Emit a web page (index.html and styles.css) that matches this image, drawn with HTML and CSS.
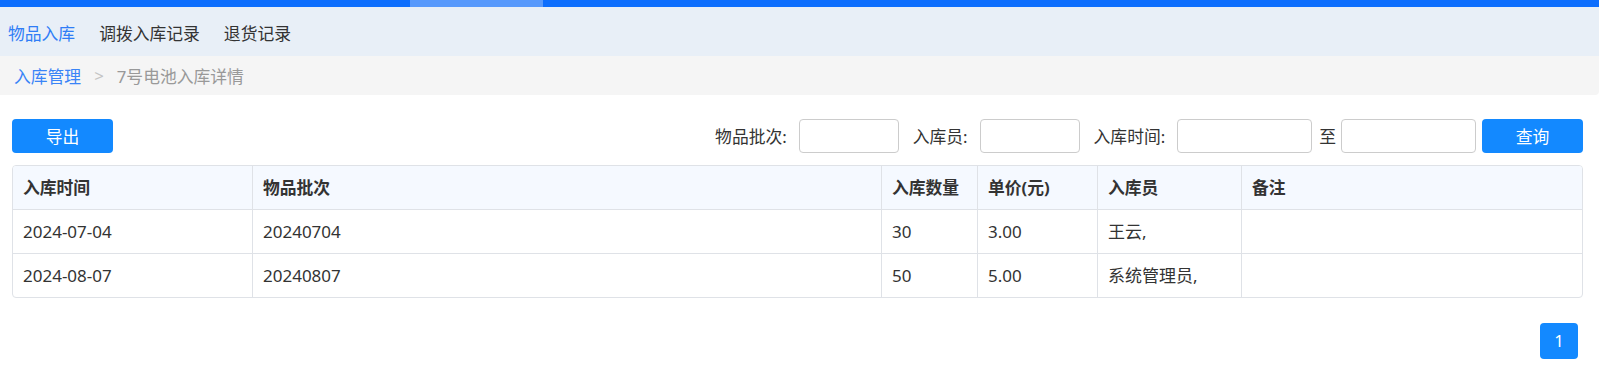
FILE: index.html
```html
<!DOCTYPE html>
<html lang="zh-CN">
<head>
  <meta charset="UTF-8">
  <meta name="viewport" content="width=device-width, initial-scale=1.0">
  <title>7号电池入库详情</title>
  <link rel="stylesheet" href="styles.css">
</head>
<body>

  <div class="topbar"><span class="topbar-mark"></span></div>

  <div class="tabs">
    <a href="#" class="tab active">物品入库</a>
    <a href="#" class="tab">调拨入库记录</a>
    <a href="#" class="tab">退货记录</a>
  </div>

  <div class="crumbs">
    <a href="#">入库管理</a>
    <span class="sep">&gt;</span>
    <span class="current">7号电池入库详情</span>
  </div>

  <div class="main">
    <div class="toolbar">
      <button class="btn">导出</button>
      <div class="filters">
        <label>物品批次:</label>
        <input type="text" class="ipt">
        <label class="gap">入库员:</label>
        <input type="text" class="ipt">
        <label class="gap">入库时间:</label>
        <input type="text" class="ipt wide">
        <span class="to">至</span>
        <input type="text" class="ipt wide">
        <button class="btn search">查询</button>
      </div>
    </div>

    <div class="table-box">
      <table>
        <colgroup>
          <col style="width: 240px">
          <col style="width: 629px">
          <col style="width: 96px">
          <col style="width: 120px">
          <col style="width: 144px">
          <col>
        </colgroup>
        <thead>
          <tr>
            <th>入库时间</th>
            <th>物品批次</th>
            <th>入库数量</th>
            <th>单价(元)</th>
            <th>入库员</th>
            <th>备注</th>
          </tr>
        </thead>
        <tbody>
          <tr>
            <td>2024-07-04</td>
            <td>20240704</td>
            <td>30</td>
            <td>3.00</td>
            <td>王云,</td>
            <td></td>
          </tr>
          <tr>
            <td>2024-08-07</td>
            <td>20240807</td>
            <td>50</td>
            <td>5.00</td>
            <td>系统管理员,</td>
            <td></td>
          </tr>
        </tbody>
      </table>
    </div>

    <div class="pager">
      <span class="page on">1</span>
    </div>
  </div>

</body>
</html>
```

FILE: styles.css
```css
body {
  font-family: "Noto Sans", "Noto Sans CJK SC", sans-serif;
  font-size: 16.8px;
  color: #333;
  background-color: #fff;
  margin: 0;
  padding: 0;
}

a {
  text-decoration: none;
}

/* barra azul do topo */
.topbar {
  height: 7px;
  background-color: #0d6efd;
  display: flex;
}

.topbar-mark {
  margin-left: 410px;
  width: 133px;
  background-color: #5799fc;
}

.tabs {
  height: 49px;
  background-color: #e8eff7;
  display: flex;
  align-items: center;
  gap: 24px;
  padding-left: 8px;
  padding-top: 2px;
  box-sizing: border-box;
}

.tab {
  color: #333;
}

.tab.active {
  color: #2f7df6;
}

.crumbs {
  height: 39px;
  background-color: #f5f5f5;
  display: flex;
  align-items: center;
  padding-left: 14px;
  border-bottom-right-radius: 4px;
}

.crumbs a {
  color: #3a84f7;
}

.crumbs .sep {
  color: #c4c4c4;
  margin: 0 13px;
}

.crumbs .current {
  color: #999;
}

.main {
  padding: 24px 16px 0 12px;
}

.toolbar {
  display: flex;
  justify-content: space-between;
  align-items: center;
}

.btn {
  width: 101px;
  height: 34px;
  background-color: #1389ff;
  color: #fff;
  border: none;
  border-radius: 4px;
  font-family: inherit;
  font-size: 16.8px;
  padding: 0;
  cursor: pointer;
}

.btn:hover {
  background-color: #0a7cf0;
}

.filters {
  display: flex;
  align-items: center;
}

.filters label {
  margin-right: 12px;
}

.filters label.gap {
  margin-left: 14px;
}

.ipt {
  width: 100px;
  height: 34px;
  box-sizing: border-box;
  border: 1px solid #cccccc;
  border-radius: 4px;
  padding: 0 8px;
  font-family: inherit;
  font-size: 15px;
}

.ipt.wide {
  width: 135px;
}

.to {
  margin: 0 5px 0 7px;
}

.search {
  margin-left: 6px;
}

.table-box {
  margin-top: 12px;
  border: 1px solid #dfe2e7;
  border-radius: 4px;
  overflow: hidden;
}

table {
  width: 100%;
  table-layout: fixed;
  border-collapse: separate;
  border-spacing: 0;
}

th, td {
  text-align: left;
  padding: 0 0 0 10px;
  line-height: 43px;
  border-right: 1px solid #dfe2e7;
  border-bottom: 1px solid #dfe2e7;
  white-space: nowrap;
  overflow: hidden;
}

td {
  font-size: 17px;
}

th:last-child, td:last-child {
  border-right: none;
}

tbody tr:last-child td {
  border-bottom: none;
}

th {
  background-color: #f5f9ff;
  font-weight: bold;
}

.pager {
  display: flex;
  justify-content: flex-end;
  margin-top: 25px;
  padding-right: 5px;
}

.page {
  width: 38px;
  height: 36px;
  line-height: 36px;
  text-align: center;
  border-radius: 4px;
  font-size: 16.8px;
  color: #333;
}

.page.on {
  background-color: #1389ff;
  color: #fff;
}
```
